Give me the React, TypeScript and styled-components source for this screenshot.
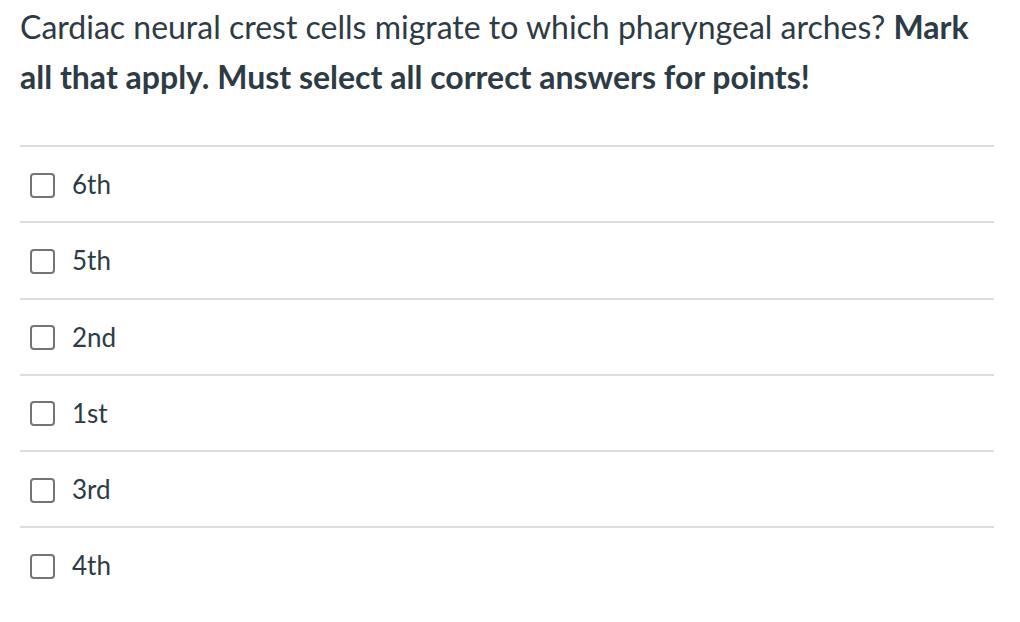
import React from 'react'
import styled, { createGlobalStyle } from 'styled-components'

const answers = ['6th', '5th', '2nd', '1st', '3rd', '4th']

const GlobalStyle = createGlobalStyle`
  html, body {
    margin: 0;
    padding: 0;
    background: #ffffff;
  }
  body {
    font-family: Lato, "Open Sans", sans-serif;
    color: #2d3b45;
  }
`

const App = () => {
    return (
        <>
            <GlobalStyle />
            <Wrapper>
                <Question>
                    Cardiac neural crest cells migrate to which pharyngeal arches?{' '}
                    <strong>Mark all that apply. Must select all correct answers for points!</strong>
                </Question>
                <AnswerList>
                    {
                        answers.map(item => (
                            <AnswerRow key={item}>
                                <CheckBox />
                                <AnswerText>{item}</AnswerText>
                            </AnswerRow>
                        ))
                    }
                </AnswerList>
            </Wrapper>
        </>
    )
}

export default App

const Wrapper = styled.div`
    padding: 0 26px 0 20px;
`
const Question = styled.div`
    font-size: 32px;
    line-height: 50px;
    padding-top: 2px;
    margin-bottom: 43px;

    strong {
        font-weight: 700;
    }
`
const AnswerList = styled.div`
    display: grid;
`
const AnswerRow = styled.div`
    display: flex;
    align-items: center;
    gap: 17px;
    height: 74.25px;
    padding-left: 10px;
    border-top: 2px solid #dddddd;
`
const CheckBox = styled.span`
    box-sizing: border-box;
    width: 25px;
    height: 25px;
    border: 2px solid #747474;
    border-radius: 4px;
    margin-top: 2px;
`
const AnswerText = styled.span`
    font-size: 26px;
    line-height: 30px;
`
